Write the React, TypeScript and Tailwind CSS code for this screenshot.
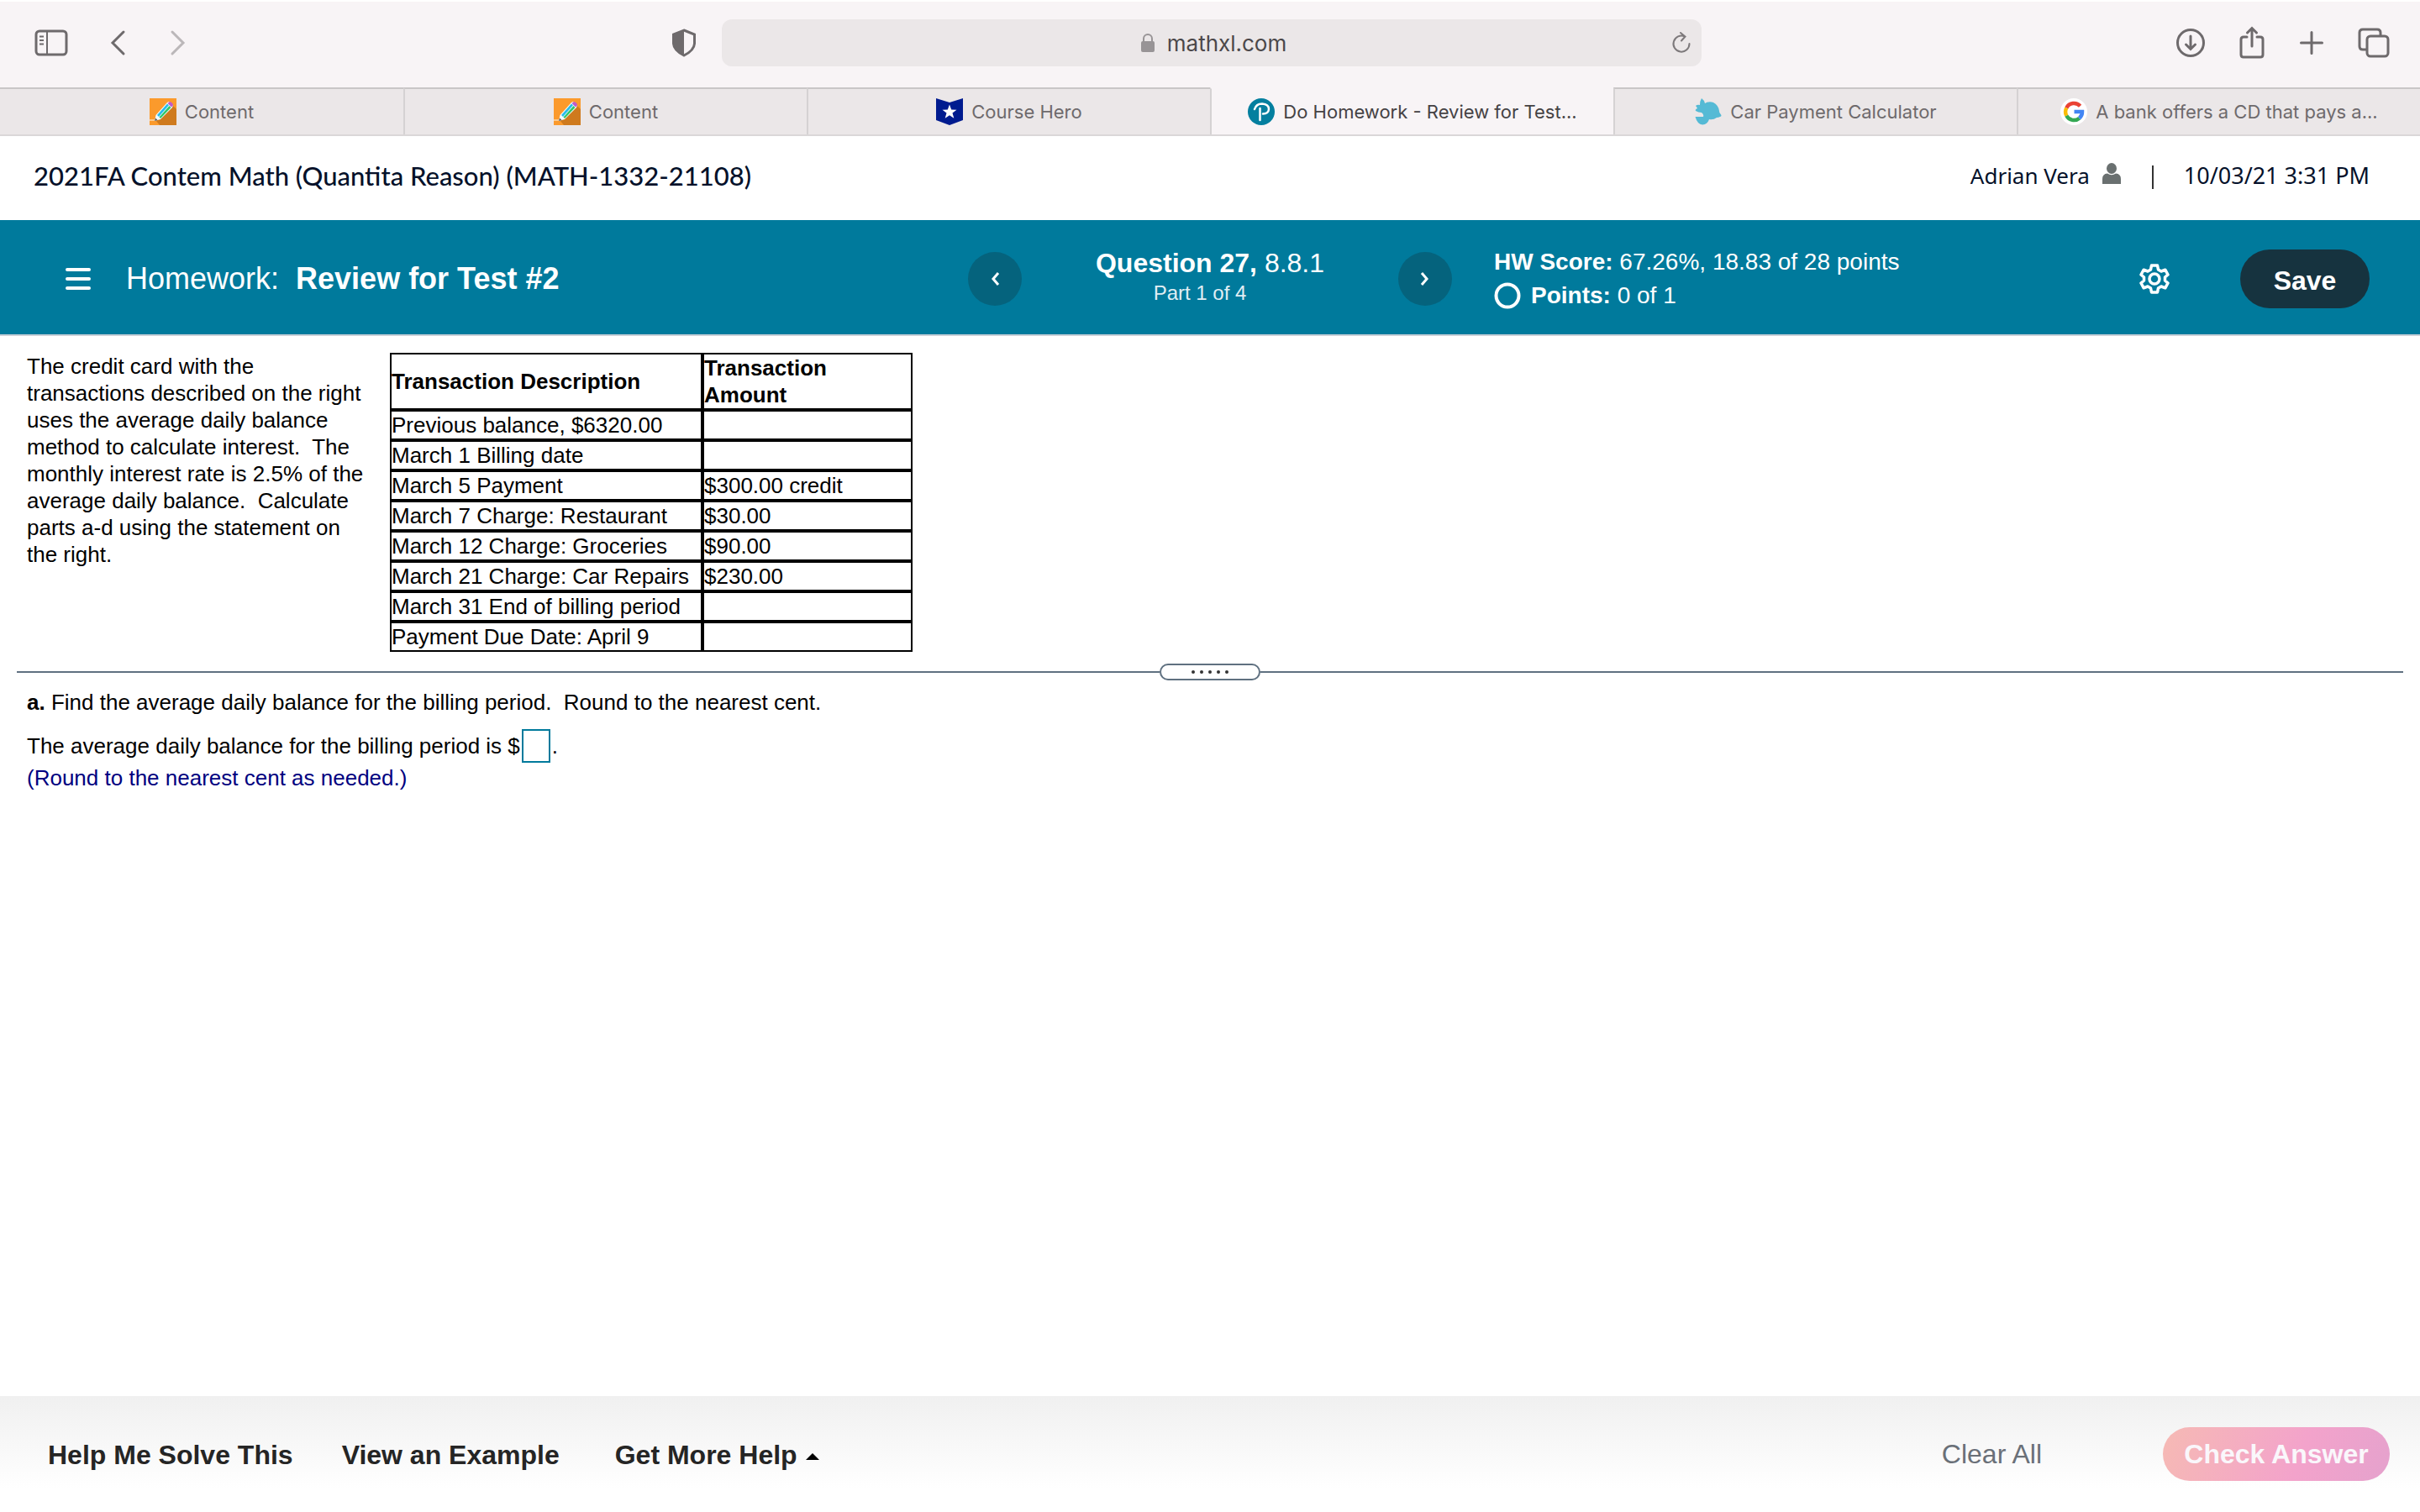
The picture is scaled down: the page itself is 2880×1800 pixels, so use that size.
import type { ReactNode } from "react";

type Tab = { title: string; icon: ReactNode; active?: boolean };

const PencilIcon = () => (
  <svg viewBox="0 0 32 32" className="h-8 w-8 shrink-0">
    <rect width="32" height="32" fill="#fb9a2c" />
    <path d="M8 27 L25 6 L32 13 V32 H12 Z" fill="#cf7a1d" />
    <path d="M0 25 H8 V27 H0 Z" fill="#fdc98a" />
    <path d="M6 27 L7.500 20 L21 5 L23 4 L28 8.500 L27 11 L13 25 Z" fill="#f4fbff" />
    <path d="M9 20 L21 6.500 L23 8.300 L11 22 Z" fill="#27bdea" />
    <path d="M11.500 22.500 L23.500 9 L25.500 11 L13 24 Z" fill="#31c768" />
    <path d="M21.500 6 L24 4 Q28 5 28 8.500 L26 10.500 Z" fill="#c05cc8" />
    <path d="M6 27 L7 23.500 L9.500 26 Z" fill="#555" />
  </svg>
);

const HeroIcon = () => (
  <svg viewBox="0 0 32 32" className="h-8 w-8 shrink-0">
    <path d="M0 0 L16 5 L32 0 V26 L16 32 L0 26 Z" fill="#001b8f" />
    <path
      d="M16 7.500 L18.200 13.500 L24.500 13.700 L19.500 17.600 L21.300 23.800 L16 20.200 L10.700 23.800 L12.500 17.600 L7.500 13.700 L13.800 13.500 Z"
      fill="#fff"
    />
  </svg>
);

const PearsonIcon = () => (
  <svg viewBox="0 0 32 32" className="h-8 w-8 shrink-0">
    <circle cx="16" cy="16" r="16" fill="#047f9f" />
    <path
      d="M8 13 Q10 6.500 17 6.500 Q25 7 25 13 Q24.500 18.500 18 18.500 M14.500 12 V26"
      fill="none"
      stroke="#fff"
      strokeWidth="2.500"
      strokeLinecap="round"
    />
  </svg>
);

const OmniIcon = () => (
  <svg viewBox="0 0 32 32" className="h-8 w-8 shrink-0">
    <path
      d="M8 0 Q11 2 12 6 Q17 3 22 5 Q28 8 29 15 Q29 17 30 18 Q33 21 30 22 Q28 23 26 23 Q22 26 17 25 Q15 31 9 31.500 Q3 31 0.500 22 L10 22 Q11 19 8 17 Q4 17 1 15 Q0 13 3 12 Q2 10 1 9 Q3 7 6 8 Q6 3 8 0 Z"
      fill="#55bad5"
    />
  </svg>
);

const GoogleIcon = () => (
  <svg viewBox="0 0 32 32" className="h-8 w-8 shrink-0">
    <circle cx="16" cy="16" r="16" fill="#fff" />
    <g fill="none" strokeWidth="4.500">
      <path d="M23.600 9.200 A10 10 0 0 0 7.300 11.500" stroke="#ea4335" />
      <path d="M7.300 11.500 A10 10 0 0 0 7.300 20.800" stroke="#fbbc05" />
      <path d="M7.300 20.800 A10 10 0 0 0 22.600 23.700" stroke="#34a853" />
      <path d="M22.600 23.700 A10 10 0 0 0 26 16 H16.500" stroke="#4285f4" />
    </g>
  </svg>
);

const tabs: Tab[] = [
  { title: "Content", icon: <PencilIcon /> },
  { title: "Content", icon: <PencilIcon /> },
  { title: "Course Hero", icon: <HeroIcon /> },
  { title: "Do Homework - Review for Test...", icon: <PearsonIcon />, active: true },
  { title: "Car Payment Calculator", icon: <OmniIcon /> },
  { title: "A bank offers a CD that pays a...", icon: <GoogleIcon /> },
];

const transactions = [
  ["Previous balance, $6320.00", ""],
  ["March 1 Billing date", ""],
  ["March 5 Payment", "$300.00 credit"],
  ["March 7 Charge: Restaurant", "$30.00"],
  ["March 12 Charge: Groceries", "$90.00"],
  ["March 21 Charge: Car Repairs", "$230.00"],
  ["March 31 End of billing period", ""],
  ["Payment Due Date: April 9", ""],
];

function Toolbar() {
  return (
    <div className="flex h-[104px] items-center border-t-2 border-white bg-[#f8f4f6] px-[36px] pb-1 font-['Inter',sans-serif] text-[#6e6a6c]">
      <div className="flex flex-1 items-center pl-1">
        <button aria-label="Sidebar">
          <svg viewBox="0 0 42 32" className="h-8 w-[42px]" fill="none" stroke="currentColor" strokeWidth="3">
            <rect x="3" y="2" width="36" height="28" rx="4" />
            <path d="M16 2 V30" strokeWidth="2" />
            <path d="M7 8.500 H12 M7 13 H12 M7 17.500 H12" strokeWidth="2" />
          </svg>
        </button>
        <button aria-label="Back" className="ml-[48px]">
          <svg viewBox="0 0 20 32" className="h-8 w-5" fill="none" stroke="currentColor" strokeWidth="3" strokeLinecap="round">
            <path d="M17 3 L4 16 L17 29" />
          </svg>
        </button>
        <button aria-label="Forward" className="ml-[52px] text-[#bbb7b9]">
          <svg viewBox="0 0 20 32" className="h-8 w-5" fill="none" stroke="currentColor" strokeWidth="3" strokeLinecap="round">
            <path d="M3 3 L16 16 L3 29" />
          </svg>
        </button>
        <button aria-label="Privacy report" className="mr-[30px] ml-auto">
          <svg viewBox="0 0 30 34" className="h-[34px] w-[30px]">
            <path d="M15 2 L27.500 7 V18 Q27 26 15 32 Q3 26 2.500 18 V7 Z" fill="none" stroke="currentColor" strokeWidth="3" />
            <path d="M15 2 L2.500 7 V18 Q3 26 15 32 Z" fill="currentColor" />
          </svg>
        </button>
      </div>
      <div className="flex h-14 w-[1166px] items-center rounded-xl bg-[#ebe7e8] px-3">
        <span className="w-7" />
        <div className="flex flex-1 items-center justify-center gap-[14px] text-[26px] text-[#4b484a]">
          <svg viewBox="0 0 18 24" className="h-6 w-[18px]">
            <rect x="1" y="10" width="16" height="13" rx="2" fill="#989496" />
            <path d="M4 11 V7 A5 5 0 0 1 14 7 V11" fill="none" stroke="#989496" strokeWidth="2" />
          </svg>
          <span>mathxl.com</span>
        </div>
        <button aria-label="Reload" className="text-[#7d797b]">
          <svg viewBox="0 0 24 28" className="h-7 w-6" fill="none" stroke="currentColor" strokeWidth="2" strokeLinecap="round">
            <path d="M21.500 15 A9.500 9.500 0 1 1 16 6.500 M11 2 L16.500 6.500 L12 11.500" />
          </svg>
        </button>
      </div>
      <div className="flex flex-1 items-center justify-end gap-[39px]">
        <button aria-label="Downloads">
          <svg viewBox="0 0 36 36" className="h-9 w-9" fill="none" stroke="currentColor" strokeWidth="3" strokeLinecap="round">
            <circle cx="18" cy="18" r="15.500" />
            <path d="M18 10 V25 M12.500 20 L18 25.500 L23.500 20" />
          </svg>
        </button>
        <button aria-label="Share">
          <svg viewBox="0 0 32 40" className="h-10 w-8" fill="none" stroke="currentColor" strokeWidth="3" strokeLinecap="round">
            <path d="M10 13 H6 Q3 13 3 16 V34 Q3 37 6 37 H26 Q29 37 29 34 V16 Q29 13 26 13 H22 M16 24 V3 M10.500 8 L16 2.500 L21.500 8" />
          </svg>
        </button>
        <button aria-label="New tab">
          <svg viewBox="0 0 32 32" className="h-8 w-8" fill="none" stroke="currentColor" strokeWidth="3" strokeLinecap="round">
            <path d="M16 3.500 V28.500 M3.500 16 H28.500" />
          </svg>
        </button>
        <button aria-label="Tab overview">
          <svg viewBox="0 0 38 36" className="h-9 w-[38px]" fill="none" stroke="currentColor" strokeWidth="3">
            <rect x="11" y="10" width="25" height="24" rx="4" />
            <path d="M11 26 H6 Q2 26 2 22 V6 Q2 2 6 2 H23 Q27 2 27 6 V10" />
          </svg>
        </button>
      </div>
    </div>
  );
}

function TabBar() {
  return (
    <nav className="grid h-[58px] grid-cols-6 border-b-2 border-[#dad7d8] font-['Inter',sans-serif] text-[22px]">
      {tabs.map((tab, i) => (
        <a
          key={i}
          href="#"
          className={
            tab.active
              ? "flex items-center justify-center gap-[10px] border-t-2 border-l-2 border-t-[#f8f4f6] border-l-[#d5d2d3] bg-[#f8f4f6] text-[#454244]"
              : "flex items-center justify-center gap-[10px] border-t-2 border-l-2 border-t-[#c9c6c7] border-l-[#d5d2d3] bg-[#ebe7e8] text-[#6e6a6c] first:border-l-0"
          }
        >
          {tab.icon}
          <span>{tab.title}</span>
        </a>
      ))}
    </nav>
  );
}

function CourseHeader() {
  return (
    <header className="flex h-[100px] items-center justify-between bg-white px-[40px] pb-[6px] text-[#05112a]">
      <h1 className="font-['Lato',sans-serif] text-[31px] font-medium">
        2021FA Contem Math (Quantita Reason) (MATH-1332-21108)
      </h1>
      <div className="flex items-center pr-[20px] font-['Noto_Sans',sans-serif] text-[26px]">
        <span>Adrian Vera</span>
        <svg viewBox="0 0 24 26" className="mb-1 ml-[14px] h-[26px] w-6" fill="#6a7070">
          <ellipse cx="12" cy="6.500" rx="6" ry="6.500" />
          <path d="M1 25 V19 Q1 13 7 12.500 Q12 16 17 12.500 Q23 13 23 19 V25 Z" />
        </svg>
        <span className="mx-[36px] mt-1 h-7 w-[2px] bg-[#333]" />
        <span className="text-[27px]">10/03/21 3:31 PM</span>
      </div>
    </header>
  );
}

function HomeworkBar() {
  return (
    <section className="grid h-[138px] grid-cols-[1fr_576px_1fr] items-center border-b-2 border-[#c9d0d8] bg-[#007a9c] px-[60px] pt-1 text-white">
      <div className="flex items-center">
        <button aria-label="Menu" className="mr-[42px] ml-[18px]">
          <svg viewBox="0 0 30 28" className="h-7 w-[30px]" stroke="currentColor" strokeWidth="4" strokeLinecap="round">
            <path d="M2 3 H28 M2 14 H28 M2 25 H28" />
          </svg>
        </button>
        <h2 className="text-[36px] whitespace-pre">
          Homework:{"  "}
          <b>Review for Test #2</b>
        </h2>
      </div>
      <div className="flex items-center justify-between">
        <button aria-label="Previous question" className="flex h-16 w-16 items-center justify-center rounded-full bg-[#05637d]">
          <svg viewBox="0 0 12 18" className="h-[18px] w-3" fill="none" stroke="currentColor" strokeWidth="3">
            <path d="M10 2 L4 9 L10 16" />
          </svg>
        </button>
        <div className="pb-[2px] text-center leading-[36px]">
          <p className="text-[32px]">
            <b>Question 27,</b> 8.8.1
          </p>
          <p className="pr-6 text-[24px] text-[#e0eef4]">Part 1 of 4</p>
        </div>
        <button aria-label="Next question" className="flex h-16 w-16 items-center justify-center rounded-full bg-[#05637d]">
          <svg viewBox="0 0 12 18" className="h-[18px] w-3" fill="none" stroke="currentColor" strokeWidth="3">
            <path d="M2 2 L8 9 L2 16" />
          </svg>
        </button>
      </div>
      <div className="flex items-center pl-[50px]">
        <div className="text-[28px] leading-[40px]">
          <p>
            <b>HW Score:</b> 67.26%, 18.83 of 28 points
          </p>
          <p className="flex items-center gap-3">
            <svg viewBox="0 0 32 32" className="h-8 w-8" fill="none" stroke="currentColor" strokeWidth="4">
              <circle cx="16" cy="16" r="13.500" />
            </svg>
            <span>
              <b>Points:</b> 0 of 1
            </span>
          </p>
        </div>
        <button aria-label="Settings" className="ml-auto">
          <svg viewBox="0 0 36 36" className="h-9 w-9" fill="none" stroke="currentColor" strokeWidth="3.500" strokeLinejoin="round">
            <path d="M14.500 2 H21.500 L22.500 7 L26 9 L30.800 7.200 L34 13 L30.500 16 V20 L34 23 L30.800 28.800 L26 27 L22.500 29 L21.500 34 H14.500 L13.500 29 L10 27 L5.200 28.800 L2 23 L5.500 20 V16 L2 13 L5.200 7.200 L10 9 L13.500 7 Z" />
            <circle cx="18" cy="18" r="6" />
          </svg>
        </button>
        <button className="ml-[84px] h-[70px] w-[154px] rounded-full bg-[#16333f] pt-1 text-[32px] font-bold">Save</button>
      </div>
    </section>
  );
}

function Problem() {
  return (
    <section className="flex items-start gap-[30px] px-[32px] pt-[20px] text-[26px] leading-[32px]">
      <p className="w-[402px]">
        The credit card with the transactions described on the right uses the average daily balance method to calculate
        interest.&nbsp; The monthly interest rate is 2.5% of the average daily balance.&nbsp; Calculate parts a-d using
        the statement on the right.
      </p>
      <table className="border-separate border-spacing-0 text-left">
        <thead>
          <tr>
            <th className="w-[372px] border-2 border-black p-0">Transaction Description</th>
            <th className="w-[250px] border-2 border-black p-0 pr-[60px]">Transaction Amount</th>
          </tr>
        </thead>
        <tbody>
          {transactions.map(([description, amount]) => (
            <tr key={description}>
              <td className="h-[36px] border-2 border-black p-0">{description}</td>
              <td className="h-[36px] border-2 border-black p-0">{amount}</td>
            </tr>
          ))}
        </tbody>
      </table>
    </section>
  );
}

function Divider() {
  return (
    <div className="mt-[14px] flex items-center px-[20px]">
      <span className="h-[2px] flex-1 bg-[#5f7080]" />
      <button
        aria-label="Resize panes"
        className="flex h-5 w-[120px] items-center justify-center gap-[6px] rounded-full border-2 border-[#5f7080] bg-white"
      >
        {[0, 1, 2, 3, 4].map((dot) => (
          <span key={dot} className="h-1 w-1 rounded-full bg-[#333]" />
        ))}
      </button>
      <span className="h-[2px] flex-1 bg-[#5f7080]" />
    </div>
  );
}

function Answer() {
  return (
    <section className="px-[32px] pt-[10px] text-[26px] leading-[32px]">
      <p>
        <b>a.</b> Find the average daily balance for the billing period.&nbsp; Round to the nearest cent.
      </p>
      <div className="mt-[16px] mb-[2px] flex items-center">
        <label htmlFor="balance">The average daily balance for the billing period is $</label>
        <input id="balance" type="text" className="mx-[2px] h-10 w-[34px] border-2 border-[#007a9c] bg-white px-1" />
        <span>.</span>
      </div>
      <p className="text-[#000080]">(Round to the nearest cent as needed.)</p>
    </section>
  );
}

function Footer() {
  return (
    <footer className="mt-auto flex h-[138px] items-center bg-linear-to-b from-[#f0f0f0] to-white to-80% px-[57px] text-[32px]">
      <div className="flex flex-1 items-center pt-[2px] font-bold text-[#252525]">
        <button>Help Me Solve This</button>
        <button className="ml-[58px]">View an Example</button>
        <button className="ml-[66px] flex items-center gap-[10px]">
          Get More Help
          <svg viewBox="0 0 16 8" className="mt-1 h-2 w-4" fill="#000">
            <path d="M8 0 L16 8 H0 Z" />
          </svg>
        </button>
      </div>
      <button className="text-[#6a7078]">Clear All</button>
      <button className="-mr-[21px] ml-[144px] h-16 w-[270px] rounded-full bg-linear-[110deg,#f6bab4,#f3a3cb_60%,#e5a2cd] font-bold text-[#faf7fb]">
        Check Answer
      </button>
    </footer>
  );
}

export default function App() {
  return (
    <div className="flex min-h-screen flex-col bg-white font-['Liberation_Sans',Arial,sans-serif] text-black">
      <Toolbar />
      <TabBar />
      <CourseHeader />
      <HomeworkBar />
      <main>
        <Problem />
        <Divider />
        <Answer />
      </main>
      <Footer />
    </div>
  );
}
